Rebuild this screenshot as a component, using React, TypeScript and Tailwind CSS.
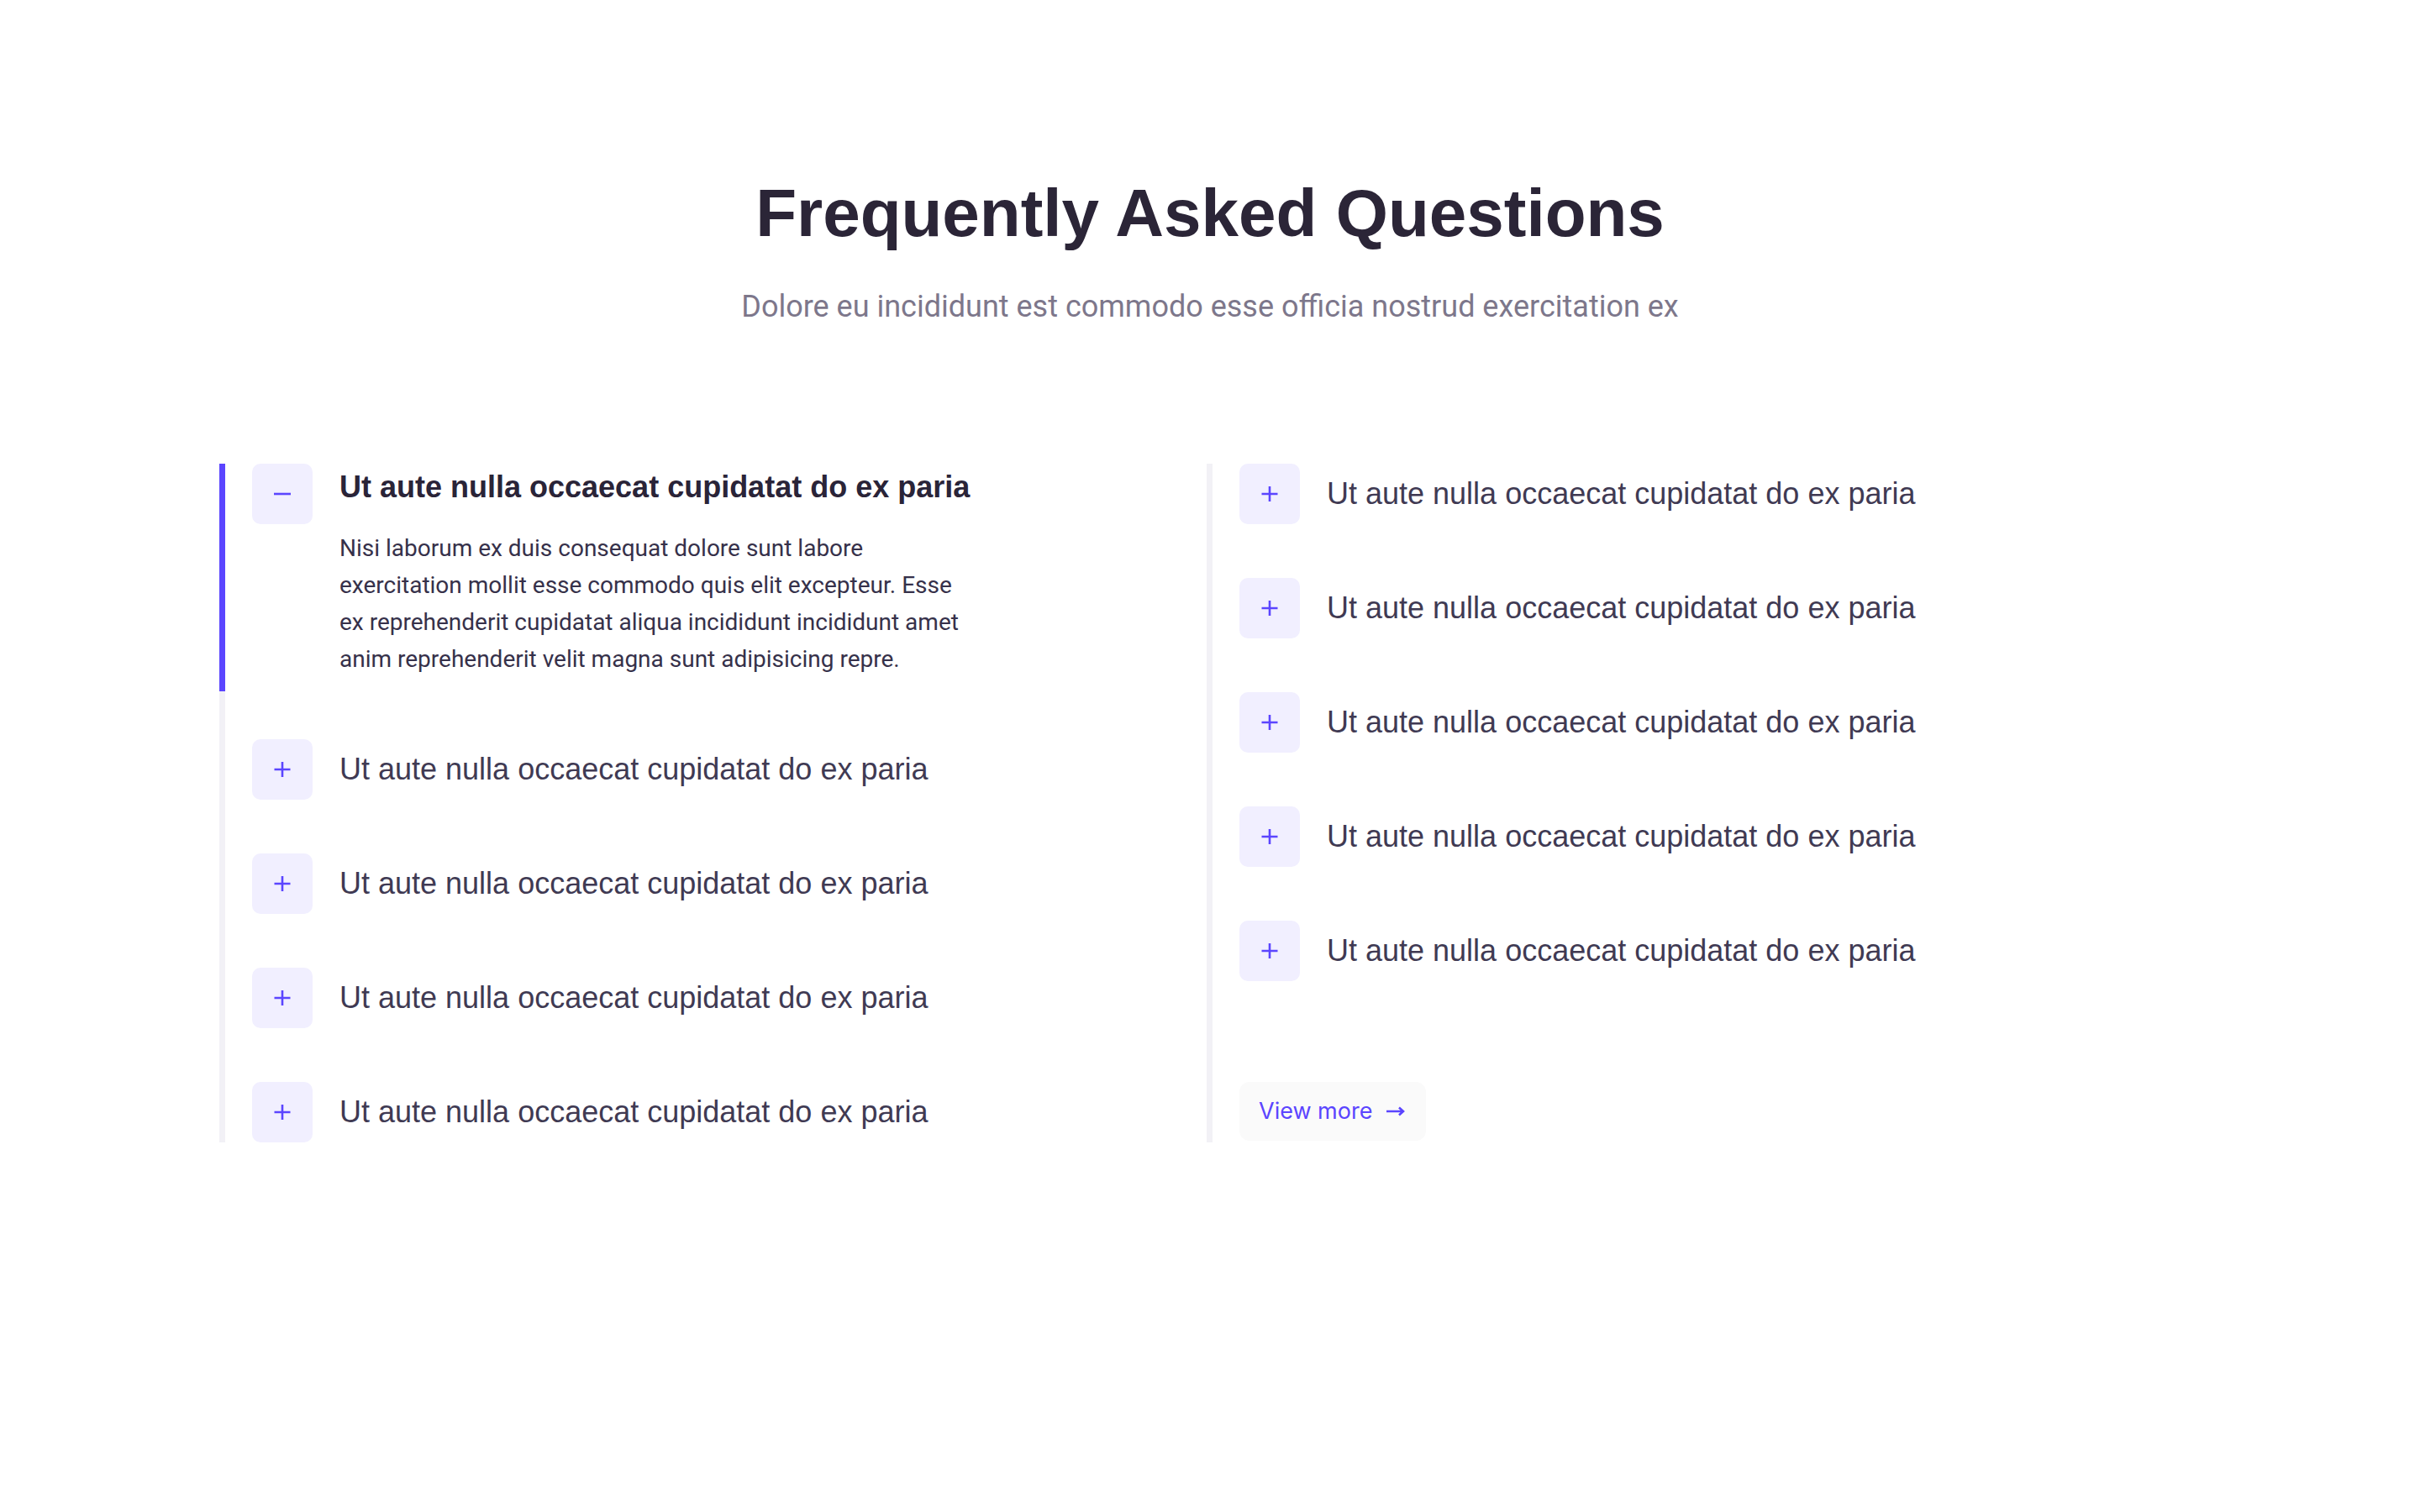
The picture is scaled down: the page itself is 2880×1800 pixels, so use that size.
import React from "react";

const Plus = () => (
  <svg width="22" height="22" viewBox="0 0 22 22" fill="none">
    <path d="M11 2V20M1.5 11H20.5" stroke="#5b45ff" strokeWidth="2.6" />
  </svg>
);

const Minus = () => (
  <svg width="22" height="22" viewBox="0 0 22 22" fill="none">
    <path d="M1 11H21" stroke="#5b45ff" strokeWidth="2.6" />
  </svg>
);

const IconBox = ({ open }: { open?: boolean }) => (
  <div className="w-[72px] h-[72px] shrink-0 rounded-[10px] bg-[#f1efff] flex items-center justify-center">
    {open ? <Minus /> : <Plus />}
  </div>
);

const Q = "Ut aute nulla occaecat cupidatat do ex paria";

const Row = ({ className = "" }: { className?: string }) => (
  <div className={`pl-8 flex items-center gap-8 ${className}`}>
    <IconBox />
    <span className="text-[36px] leading-[48px] text-[#403a53] font-['Liberation_Sans',Arial,sans-serif]">
      {Q}
    </span>
  </div>
);

export default function App() {
  return (
    <div className="w-full min-h-[1800px] bg-white">
      <div className="pt-[206px] flex flex-col items-center">
        <h1 className="text-[80px] leading-[96px] font-bold text-[#2b2537] font-['Liberation_Sans',Arial,sans-serif]">
          Frequently Asked Questions
        </h1>
        <p className="mt-[39px] text-[36px] leading-[48px] text-[#7d778b] font-['Roboto',sans-serif]">
          Dolore eu incididunt est commodo esse officia nostrud exercitation ex
        </p>
      </div>

      <div className="mt-[163px] ml-[261px] grid grid-cols-[1175px_1175px]">
        <div className="border-l-[7px] border-[#f2f1f6] flex flex-col">
          <div className="-ml-[7px] border-l-[7px] border-[#5b45ff] pl-8 pb-[16px] flex items-start gap-8">
            <IconBox open />
            <div className="w-[760px]">
              <h3 className="text-[36px] leading-[56px] font-bold text-[#2a2438] font-['Liberation_Sans',Arial,sans-serif]">
                {Q}
              </h3>
              <p className="mt-[23px] text-[28px] leading-[44px] text-[#36314a] font-['Roboto',sans-serif]">
                Nisi laborum ex duis consequat dolore sunt labore exercitation mollit esse commodo quis elit
                excepteur. Esse ex reprehenderit cupidatat aliqua incididunt incididunt amet anim reprehenderit
                velit magna sunt adipisicing repre.
              </p>
            </div>
          </div>
          <Row className="mt-[57px]" />
          <Row className="mt-[64px]" />
          <Row className="mt-[64px]" />
          <Row className="mt-[64px]" />
        </div>

        <div className="border-l-[7px] border-[#f2f1f6] flex flex-col">
          <Row />
          <Row className="mt-[64px]" />
          <Row className="mt-[64px]" />
          <Row className="mt-[64px]" />
          <Row className="mt-[64px]" />
          <div className="pl-8 mt-[120px]">
            <button className="w-[222px] h-[70px] rounded-[12px] bg-[#fafafa] flex items-center pl-[23px] gap-[16px] text-[#5b45ff]">
              <span className="text-[27px] leading-[36px] font-['Inter',sans-serif]">View more</span>
              <svg width="24" height="16" viewBox="0 0 24 16" fill="none">
                <path d="M1 8H21M16 3.5L21 8L16 12.5" stroke="#5b45ff" strokeWidth="2.6" />
              </svg>
            </button>
          </div>
        </div>
      </div>
    </div>
  );
}
